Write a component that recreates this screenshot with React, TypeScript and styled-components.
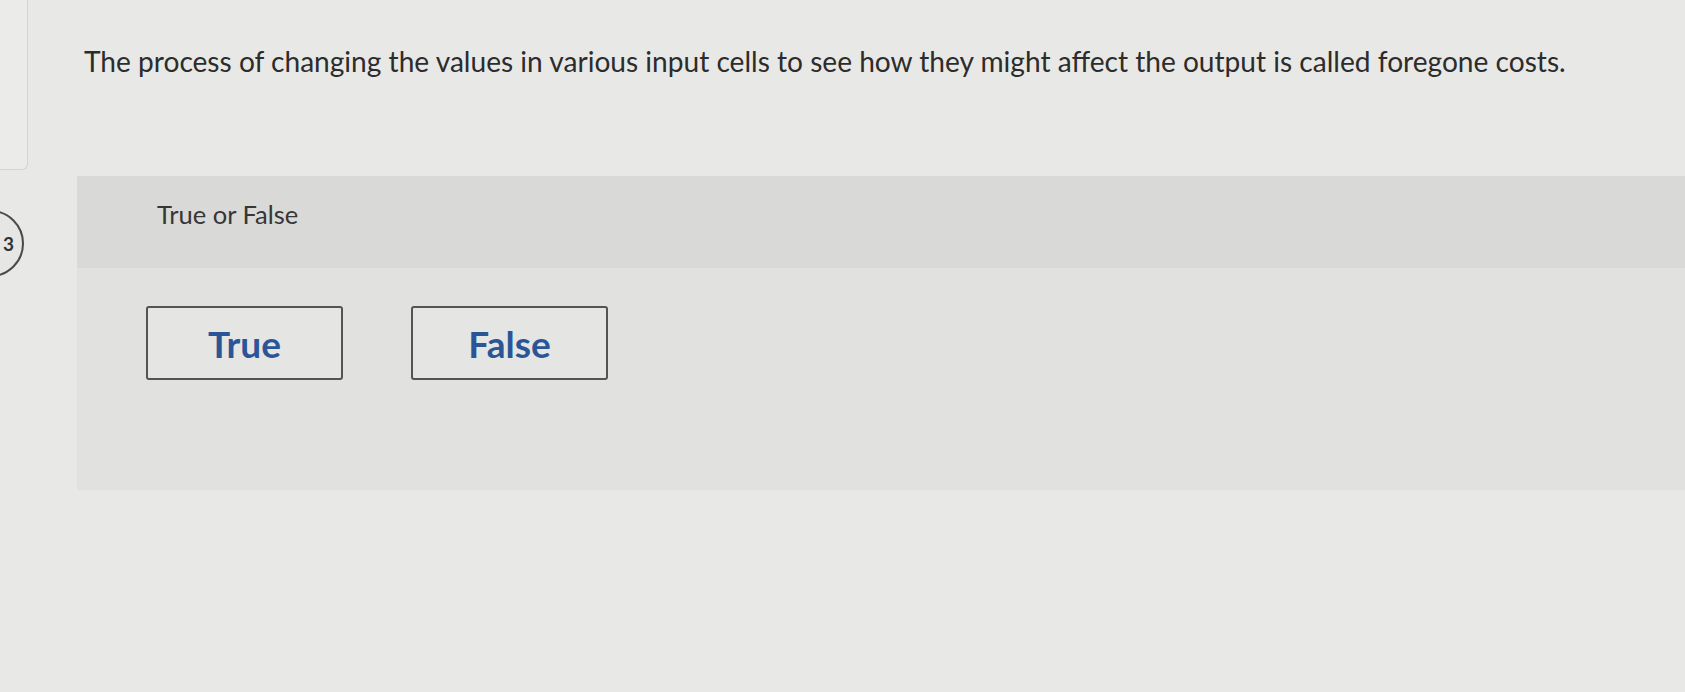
import styled, { createGlobalStyle } from 'styled-components'

const GlobalStyle = createGlobalStyle`
  html, body {
    margin: 0;
    padding: 0;
    background: #e8e8e6;
    height: 692px;
    overflow: hidden;
  }
  * { box-sizing: border-box; }
`

const Page = styled.div`
  display: flex;
  height: 692px;
  font-family: Lato, "Liberation Sans", sans-serif;
  color: #333;
`

const Rail = styled.aside`
  width: 28px;
  flex-shrink: 0;
  display: flex;
  flex-direction: column;
`

const RailCard = styled.div`
  height: 170px;
  background: #ebebe9;
  border: 1px solid #d4d4d2;
  border-left: none;
  border-top: none;
  border-radius: 0 0 6px 0;
`

const NumberBadge = styled.div`
  width: 67px;
  height: 67px;
  margin: 40px 0 0 -43px;
  border: 2px solid #4a4a4a;
  border-radius: 50%;
  background: #e6e6e4;
  display: flex;
  align-items: center;
  padding-left: 44px;
  font-weight: 700;
  font-size: 19px;
  color: #333;
`

const Main = styled.main`
  flex: 1;
  padding: 45px 0 0 49px;
  display: flex;
  flex-direction: column;
`

const Question = styled.p`
  margin: 0 0 0 7px;
  font-size: 28.1px;
  line-height: 32px;
  color: #2c2c2c;
`

const Panel = styled.section`
  margin-top: 99px;
  height: 314px;
  background: #e1e1df;
  display: flex;
  flex-direction: column;
`

const PanelHeader = styled.div`
  height: 92px;
  background: #d9d9d7;
  padding: 23px 0 0 80px;
  font-size: 25.5px;
  line-height: 30px;
  color: #363636;
`

const Choices = styled.div`
  display: flex;
  gap: 68px;
  padding: 38px 0 0 69px;
`

const ChoiceButton = styled.button`
  width: 197px;
  height: 74px;
  background: #e5e5e3;
  border: 2px solid #545454;
  border-radius: 3px;
  font-family: Lato, "Liberation Sans", sans-serif;
  font-weight: 700;
  font-size: 37px;
  color: #2a5698;
  cursor: pointer;
  padding: 0;
`

export default function App() {
  return (
    <>
      <GlobalStyle />
      <Page>
        <Rail>
          <RailCard />
          <NumberBadge>3</NumberBadge>
        </Rail>
        <Main>
          <Question>
            The process of changing the values in various input cells to see how they might affect the output is called foregone costs.
          </Question>
          <Panel>
            <PanelHeader>True or False</PanelHeader>
            <Choices>
              <ChoiceButton>True</ChoiceButton>
              <ChoiceButton>False</ChoiceButton>
            </Choices>
          </Panel>
        </Main>
      </Page>
    </>
  )
}
